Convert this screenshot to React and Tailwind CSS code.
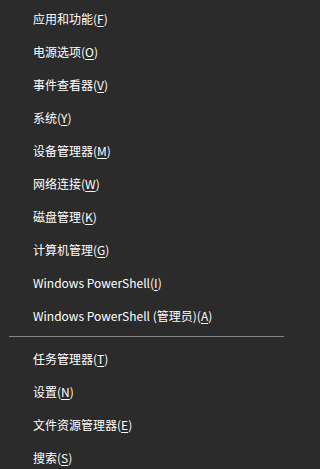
import React from "react";

const items = [
  { label: "应用和功能", key: "F" },
  { label: "电源选项", key: "O" },
  { label: "事件查看器", key: "V" },
  { label: "系统", key: "Y" },
  { label: "设备管理器", key: "M" },
  { label: "网络连接", key: "W" },
  { label: "磁盘管理", key: "K" },
  { label: "计算机管理", key: "G" },
  { label: "Windows PowerShell", key: "I" },
  { label: "Windows PowerShell (管理员)", key: "A" },
];

const items2 = [
  { label: "任务管理器", key: "T" },
  { label: "设置", key: "N" },
  { label: "文件资源管理器", key: "E" },
  { label: "搜索", key: "S" },
];

function Row({ label, k }) {
  return (
    <div className="flex h-[33px] items-center pl-[33px] text-[12px] leading-none text-white whitespace-nowrap">
      <span>
        {label}(<span className="underline underline-offset-2">{k}</span>)
      </span>
    </div>
  );
}

export default function App() {
  return (
    <div
      className="min-h-screen w-full bg-[#2b2b2b]"
      style={{ fontFamily: '"Noto Sans CJK SC", "Noto Sans", sans-serif' }}
    >
      <div className="h-[469px] w-[294px] overflow-hidden pt-[2px]">
        {items.map((it) => (
          <Row key={it.key} label={it.label} k={it.key} />
        ))}
        <div className="flex h-[10px] items-start pt-[4px] pl-[9px] pr-[10px]">
          <div className="h-px w-full bg-[#868686]" />
        </div>
        {items2.map((it) => (
          <Row key={it.key} label={it.label} k={it.key} />
        ))}
      </div>
    </div>
  );
}
